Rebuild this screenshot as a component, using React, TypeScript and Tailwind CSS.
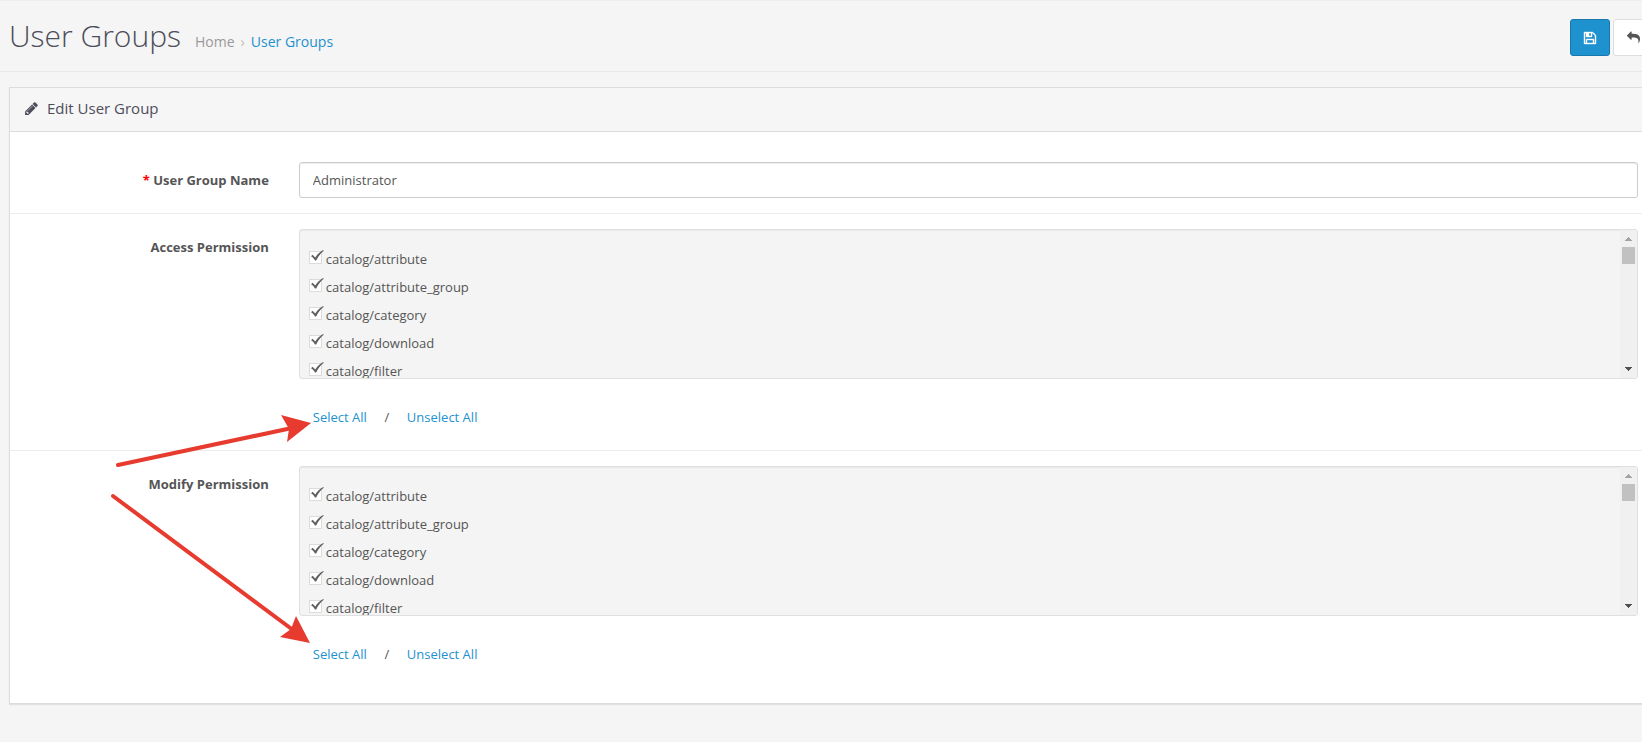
import { useState } from "react";

const permissions = [
  "catalog/attribute",
  "catalog/attribute_group",
  "catalog/category",
  "catalog/download",
  "catalog/filter",
];

function Icon({ path, className }: { path: string; className: string }) {
  return (
    <svg viewBox="0 0 1792 1792" className={className} fill="currentColor" aria-hidden="true">
      <path d={path} />
    </svg>
  );
}

const floppy =
  "M512 1536h768v-384h-768v384zm896 0h128v-896q0-14-10-38.5t-20-34.5l-281-281q-10-10-34-20t-39-10v416q0 40-28 68t-68 28h-576q-40 0-68-28t-28-68v-416h-128v1280h128v-416q0-40 28-68t68-28h832q40 0 68 28t28 68v416zm-384-928v-320q0-13-9.5-22.5t-22.5-9.5h-192q-13 0-22.5 9.5t-9.5 22.5v320q0 13 9.5 22.5t22.5 9.5h192q13 0 22.5-9.5t9.5-22.5zm640 32v928q0 40-28 68t-68 28h-1344q-40 0-68-28t-28-68v-1344q0-40 28-68t68-28h928q40 0 88 20t76 48l280 280q28 28 48 76t20 88z";
const reply =
  "M1792 1120q0 166-127 451-3 7-10.5 24t-13.5 30-13 22q-12 17-28 17-15 0-23.5-10t-8.5-25q0-9 2.5-26.5t2.5-23.5q5-68 5-123 0-101-17.5-181t-48.5-138.5-80-101-105.5-69.5-133-42.5-154-21.5-175.5-6h-224v256q0 26-19 45t-45 19-45-19l-512-512q-19-19-19-45t19-45l512-512q19-19 45-19t45 19 19 45v256h224q713 0 875 403 53 134 53 333z";
const pencil =
  "M491 1536l91-91-235-235-91 91v107h128v128h107zm523-928q0-22-22-22-10 0-17 7l-542 542q-7 7-7 17 0 22 22 22 10 0 17-7l542-542q7-7 7-17zm-54-192l416 416-832 832h-416v-416zm683 96q0 53-37 90l-166 166-416-416 166-165q36-38 90-38 53 0 91 38l235 234q37 39 37 91z";

function Scrollbar() {
  return (
    <div className="flex w-[17px] flex-col items-center bg-[#f0f0f0]" aria-hidden="true">
      <div className="flex h-[17px] items-center">
        <svg width="7" height="4" fill="#a3a3a3" shapeRendering="crispEdges">
          <path d="M3 0h1v1h1v1h1v1h1v1H0V3h1V2h1V1h1z" />
        </svg>
      </div>
      <div className="h-[17px] w-[13px] bg-[#c1c1c1]" />
      <div className="mt-auto flex h-[18px] items-center">
        <svg width="7" height="4" fill="#505050" shapeRendering="crispEdges">
          <path d="M0 0h7v1H6v1H5v1H4v1H3V3H2V2H1V1H0z" />
        </svg>
      </div>
    </div>
  );
}

function PermissionGroup({ title, name }: { title: string; name: string }) {
  const [selected, setSelected] = useState<string[]>(permissions);

  const toggle = (item: string) =>
    setSelected((prev) =>
      prev.includes(item) ? prev.filter((p) => p !== item) : [...prev, item],
    );

  return (
    <div
      role="group"
      aria-labelledby={name}
      className="grid grid-cols-[1fr_5fr] border-t border-[#ededed] py-[15px]"
    >
      <div id={name} className="px-[15px] pt-2 text-right font-bold">
        {title}
      </div>
      <div className="px-[15px]">
        <div className="flex h-[150px] overflow-hidden rounded-[3px] border border-[#e0e0e0] bg-[#f4f4f4] shadow-[inset_0_1px_1px_rgba(0,0,0,0.05)]">
          <div className="flex-1 overflow-hidden px-[9px] pt-[15px]">
            {permissions.map((item) => (
              <label key={item} className="flex h-7 items-center gap-1">
                <span className="relative -mt-1 flex">
                  <input
                    type="checkbox"
                    name={name}
                    checked={selected.includes(item)}
                    onChange={() => toggle(item)}
                    className="peer size-[13px] appearance-none border border-[#dcdcdc] bg-white"
                  />
                  <svg
                    viewBox="0 0 13 11"
                    className="pointer-events-none absolute left-[2px] top-[-1px] hidden h-[11px] w-[13px] peer-checked:block"
                    fill="#5f5f5f"
                  >
                    <path d="M0 6.2L1.6 4.8L4.2 7.4C6.2 4.4 8.8 1.8 12.2 0L12.7 0.8C9.6 3.4 7.2 6.4 5.2 10.6H4C3 8.4 1.6 7 0 6.2Z" />
                  </svg>
                </span>
                {item}
              </label>
            ))}
          </div>
          <Scrollbar />
        </div>
        <div className="flex h-[56px] items-end px-[14px] pb-[8px]">
          <button
            type="button"
            onClick={() => setSelected(permissions)}
            className="text-[#1e91cf]"
          >
            Select All
          </button>
          <span className="w-10 text-center">/</span>
          <button type="button" onClick={() => setSelected([])} className="text-[#1e91cf]">
            Unselect All
          </button>
        </div>
      </div>
    </div>
  );
}

export default function App() {
  return (
    <div className="relative min-h-screen overflow-hidden border-t border-[#eeeeee] bg-[#f5f5f5] font-['Open_Sans','Noto_Sans',sans-serif] text-[13px] leading-5 text-[#555555]">
      <header className="-mr-3 flex h-[71px] items-start justify-between border-b border-[#e9e9e9] pl-[9px] pr-px pt-[18px]">
        <div className="-mt-px flex items-baseline gap-[14px]">
          <h1 className="text-[30px] font-light leading-9 text-[#4c4d5a]">User Groups</h1>
          <nav aria-label="Breadcrumb" className="flex items-baseline gap-[6px] text-[14px]">
            <a href="#home" className="text-[#999999]">
              Home
            </a>
            <span className="text-[#bbbbbb]">›</span>
            <a href="#groups" className="text-[#1e91cf]">
              User Groups
            </a>
          </nav>
        </div>
        <div className="flex gap-[3px]">
          <button
            type="submit"
            form="group-form"
            aria-label="Save"
            className="flex h-[37px] w-10 items-center justify-center rounded-[3px] border border-[#1978ab] bg-[#1e91cf] text-white"
          >
            <Icon path={floppy} className="size-[14px] stroke-white stroke-[50]" />
          </button>
          <button
            type="button"
            aria-label="Cancel"
            className="flex h-[37px] w-10 items-center justify-center rounded-[3px] border border-[#dddddd] bg-white text-[#555555]"
          >
            <Icon path={reply} className="size-[13px]" />
          </button>
        </div>
      </header>

      <main className="-mr-3 ml-[9px] mt-[15px] border border-[#dcdcdc] bg-white shadow-[0_1px_1px_rgba(0,0,0,0.08)]">
        <div className="flex h-11 items-start gap-2 border-b border-[#dcdcdc] bg-[#f6f6f6] pl-[14px] pt-[10px] text-[#4c4d5a]">
          <Icon path={pencil} className="mt-[3px] size-[15px]" />
          <h2 className="text-[15px]">Edit User Group</h2>
        </div>
        <form id="group-form" className="pb-4 pt-[15px]" onSubmit={(e) => e.preventDefault()}>
          <div className="grid grid-cols-[1fr_5fr] py-[15px]">
            <label htmlFor="group-name" className="px-[15px] pt-2 text-right font-bold">
              <span className="text-[#ff0000]">*</span> User Group Name
            </label>
            <div className="px-[15px]">
              <input
                id="group-name"
                type="text"
                defaultValue="Administrator"
                className="h-9 w-full rounded-[3px] border border-[#cccccc] bg-white px-[13px] shadow-[inset_0_1px_1px_rgba(0,0,0,0.075)]"
              />
            </div>
          </div>
          <PermissionGroup title="Access Permission" name="access" />
          <PermissionGroup title="Modify Permission" name="modify" />
        </form>
      </main>

      {/* Arrows pointing at the two Select All links */}
      <svg
        width="330"
        height="660"
        className="pointer-events-none absolute left-0 top-0"
        fill="#e63b2e"
        stroke="#e63b2e"
        aria-hidden="true"
      >
        <path d="M118 464L292 427M113 495L293 629" strokeWidth="4" strokeLinecap="round" />
        <path d="M311 422L281 414L289 428L287 441ZM310 642L296 615L291 628L280 636Z" stroke="none" />
      </svg>
    </div>
  );
}
